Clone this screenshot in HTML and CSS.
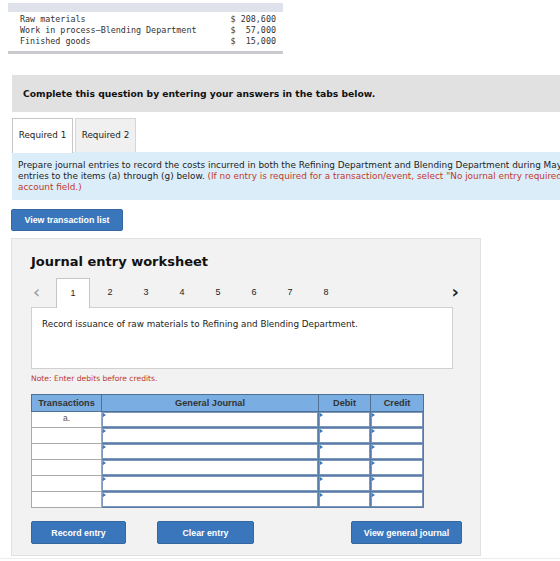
FILE: index.html
```html
<!DOCTYPE html>
<html lang="en">
<head>
    <meta charset="UTF-8">
    <meta name="viewport" content="width=device-width, initial-scale=1.0">
    <title>Journal entry worksheet</title>
    <link rel="stylesheet" href="styles.css">
</head>
<body>
    <div class="given">
        <div class="given-head"></div>
        <div class="given-row"><span>Raw materials</span><span>$ 208,600</span></div>
        <div class="given-row"><span>Work in process&mdash;Blending Department</span><span>$&nbsp;&nbsp;57,000</span></div>
        <div class="given-row"><span>Finished goods</span><span>$&nbsp;&nbsp;15,000</span></div>
    </div>

    <div class="question">
        <div class="band">Complete this question by entering your answers in the tabs below.</div>

        <div class="tabs">
            <div class="tab active">Required 1</div>
            <div class="tab">Required 2</div>
        </div>

        <div class="info">
            Prepare journal entries to record the costs incurred in both the Refining Department and Blending Department during May. Key your<br>
            entries to the items (a) through (g) below. <span class="warn">(If no entry is required for a transaction/event, select "No journal entry required" in the first</span><br>
            <span class="warn">account field.)</span>
        </div>

        <button class="btn btn-list">View transaction list</button>

        <div class="worksheet">
            <h3>Journal entry worksheet</h3>

            <div class="steps">
                <span class="arrow prev">&lsaquo;</span>
                <span class="step active">1</span>
                <span class="step">2</span>
                <span class="step">3</span>
                <span class="step">4</span>
                <span class="step">5</span>
                <span class="step">6</span>
                <span class="step">7</span>
                <span class="step">8</span>
                <span class="arrow next">&rsaquo;</span>
            </div>

            <div class="prompt">Record issuance of raw materials to Refining and Blending Department.</div>

            <div class="note">Note: Enter debits before credits.</div>

            <table class="journal">
                <tr class="head">
                    <th class="c-tx">Transactions</th>
                    <th class="c-gj">General Journal</th>
                    <th class="c-dr">Debit</th>
                    <th class="c-cr">Credit</th>
                </tr>
                <tr>
                    <td class="tx">a.</td>
                    <td class="in"><div class="fld"></div></td>
                    <td class="in"><div class="fld"></div></td>
                    <td class="in"><div class="fld"></div></td>
                </tr>
                <tr>
                    <td class="tx"></td>
                    <td class="in"><div class="fld"></div></td>
                    <td class="in"><div class="fld"></div></td>
                    <td class="in"><div class="fld"></div></td>
                </tr>
                <tr>
                    <td class="tx"></td>
                    <td class="in"><div class="fld"></div></td>
                    <td class="in"><div class="fld"></div></td>
                    <td class="in"><div class="fld"></div></td>
                </tr>
                <tr>
                    <td class="tx"></td>
                    <td class="in"><div class="fld"></div></td>
                    <td class="in"><div class="fld"></div></td>
                    <td class="in"><div class="fld"></div></td>
                </tr>
                <tr>
                    <td class="tx"></td>
                    <td class="in"><div class="fld"></div></td>
                    <td class="in"><div class="fld"></div></td>
                    <td class="in"><div class="fld"></div></td>
                </tr>
                <tr>
                    <td class="tx"></td>
                    <td class="in"><div class="fld"></div></td>
                    <td class="in"><div class="fld"></div></td>
                    <td class="in"><div class="fld"></div></td>
                </tr>
            </table>

            <div class="actions">
                <button class="btn btn-record">Record entry</button>
                <button class="btn btn-clear">Clear entry</button>
                <button class="btn btn-view">View general journal</button>
            </div>
        </div>
    </div>
    <div class="bottom-line"></div>
</body>
</html>
```

FILE: styles.css
```css
body {
    margin: 0;
    padding-top: 3px;
    font-family: "DejaVu Sans", Verdana, sans-serif;
    color: #222;
    background: #fff;
    overflow: hidden;
    width: 560px;
}

.given {
    width: 275px;
    margin-left: 8px;
    padding-bottom: 4px;
    border-bottom: 3px solid #c9cacd;
}

.given-head {
    height: 9px;
    background-color: #dfe2ea;
    margin-bottom: 2px;
}

.given-row {
    display: flex;
    justify-content: space-between;
    padding: 0 7px 0 12px;
    font-family: "DejaVu Sans Mono", "Liberation Mono", monospace;
    font-size: 8.4px;
    line-height: 11px;
    color: #333;
    white-space: pre;
}

.question {
    margin-top: 21px;
    padding-left: 12px;
    width: 700px;
}

.band {
    height: 37px;
    line-height: 37px;
    padding-left: 11px;
    background-color: #e1e1e1;
    font-size: 9.2px;
    font-weight: bold;
    color: #111;
}

.tabs {
    display: flex;
    gap: 2px;
    margin-top: 6px;
}

.tab {
    width: 59px;
    height: 33px;
    line-height: 33px;
    text-align: center;
    font-size: 8.8px;
    color: #222;
    background-color: #f0f0f0;
    border: 1px solid #d6d6d6;
    border-bottom: none;
}

.tab.active {
    background-color: #fff;
    border-color: #c6c6c6;
    height: 34px;
    margin-bottom: -1px;
}

.info {
    background-color: #dcedfa;
    padding: 8px 6px 7px 6px;
    font-size: 8.9px;
    line-height: 11px;
    color: #222;
    white-space: nowrap;
}

.warn {
    color: #c0392b;
}

.btn {
    font-family: "Liberation Sans", Arial, sans-serif;
    font-weight: bold;
    font-size: 8.8px;
    color: #fff;
    background-color: #3a76bb;
    border: 1px solid #35689f;
    border-radius: 2px;
    padding: 0;
    cursor: pointer;
}

.btn-list {
    display: block;
    margin: 9px 0 0 -1px;
    width: 112px;
    height: 22px;
}

.worksheet {
    width: 449px;
    margin-top: 7px;
    margin-left: -1px;
    padding: 0 0 11px 19px;
    background-color: #f2f2f2;
    border: 1px solid #e1e1e1;
}

.worksheet h3 {
    margin: 0;
    padding-top: 15px;
    font-size: 13px;
    line-height: 16px;
    color: #111;
}

.steps {
    display: flex;
    align-items: center;
    margin-top: 7px;
    width: 428px;
    height: 30px;
    font-family: "Liberation Sans", Arial, sans-serif;
    font-size: 9px;
    color: #222;
}

.arrow {
    font-family: "DejaVu Sans", sans-serif;
    font-size: 18px;
    line-height: 20px;
}

.prev {
    width: 25px;
    padding-left: 2px;
    box-sizing: border-box;
    color: #999;
}

.next {
    margin-left: auto;
    color: #222;
    font-weight: bold;
}

.step {
    width: 36px;
    text-align: center;
}

.step.active {
    width: 34px;
    height: 30px;
    line-height: 28px;
    margin-right: 2px;
    margin-top: 1px;
    box-sizing: border-box;
    background-color: #fff;
    border: 1px solid #c6c6c6;
    border-bottom: none;
    position: relative;
    z-index: 1;
}

.prompt {
    width: 400px;
    height: 50px;
    padding: 10px 10px 0 10px;
    background-color: #fff;
    border: 1px solid #d0d0d0;
    font-size: 8.8px;
    line-height: 12px;
    color: #222;
}

.note {
    margin-top: 5px;
    font-size: 7.6px;
    line-height: 10px;
    color: #c0392b;
}

.journal {
    margin-top: 10px;
    border-collapse: collapse;
    font-family: "Liberation Sans", Arial, sans-serif;
}

.journal tr {
    height: 16px;
}

.journal tr.head {
    height: 17px;
}

.journal th {
    padding: 0;
    background-color: #7aade2;
    border: 1px solid #4f6f95;
    font-size: 9.2px;
    color: #333;
    text-align: center;
}

.c-tx { width: 69px; }
.c-gj { width: 216px; }
.c-dr { width: 51px; }
.c-cr { width: 52px; }

.journal td {
    padding: 0;
}

.journal td.tx {
    background-color: #fff;
    border: 1px solid #a9a9a9;
    font-size: 8.5px;
    color: #555;
    text-align: center;
    vertical-align: top;
    line-height: 12px;
}

.journal td.in {
    border: 1px solid #587aa8;
    background-color: #fff;
}

.fld {
    position: relative;
    height: 13px;
    border: 1px solid #7d97bb;
    background-color: #fff;
}

.fld::before {
    content: "";
    position: absolute;
    left: 0;
    top: 0;
    border-top: 2px solid transparent;
    border-bottom: 2px solid transparent;
    border-left: 3px solid #3a76bb;
}

.actions {
    display: flex;
    margin-top: 13px;
}

.actions .btn {
    height: 23px;
}

.btn-record {
    width: 95px;
}

.btn-clear {
    width: 97px;
    margin-left: 31px;
}

.btn-view {
    width: 111px;
    margin-left: 97px;
}

.bottom-line {
    margin-top: 2px;
    height: 1px;
    background-color: #ececec;
}
```
